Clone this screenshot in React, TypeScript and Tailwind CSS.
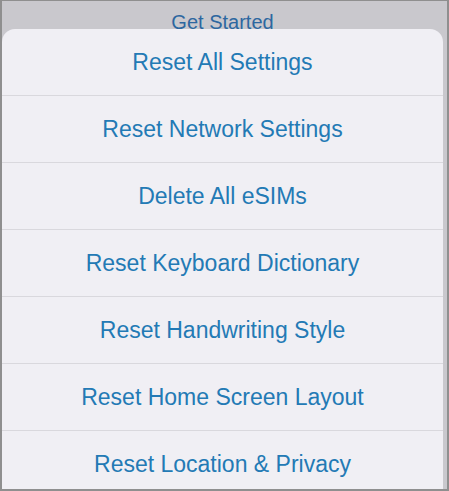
const items = [
  "Reset All Settings",
  "Reset Network Settings",
  "Delete All eSIMs",
  "Reset Keyboard Dictionary",
  "Reset Handwriting Style",
  "Reset Home Screen Layout",
  "Reset Location & Privacy",
];

export default function App() {
  return (
    <div
      className="w-[449px] h-[491px] overflow-hidden bg-[#c9c8cd] border-l-2 border-t border-r-2 border-b-2 border-[#8f8f8f] flex flex-col"
      style={{ fontFamily: '"Liberation Sans", Arial, sans-serif' }}
    >
      {/* dimmed page behind the sheet */}
      <div className="h-[28px] shrink-0 overflow-hidden mr-[4px]">
        <p className="pt-[11px] text-center text-[20px] leading-[20px] text-[#2d67a0]">
          Get Started
        </p>
      </div>

      {/* action sheet */}
      <div className="flex-1 mr-[4px] bg-[#f0eff4] rounded-t-[13px] overflow-hidden">
        {items.map((label, i) => (
          <div
            key={label}
            className={`h-[67px] flex items-center justify-center text-[23px] text-[#237ab5] ${
              i < items.length - 1 ? "border-b border-[#d9d8dd]" : ""
            }`}
          >
            {label}
          </div>
        ))}
      </div>
    </div>
  );
}
